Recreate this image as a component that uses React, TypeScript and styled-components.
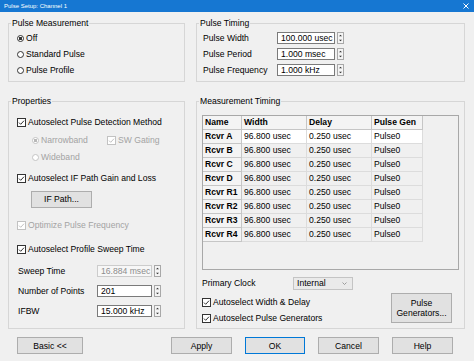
import styled, { createGlobalStyle } from 'styled-components'

const GlobalStyle = createGlobalStyle`
  html, body {
    margin: 0;
    padding: 0;
    background: #f0f0f0;
  }
  body {
    font-family: 'Liberation Sans', Arial, sans-serif;
    font-size: 8.6px;
    color: #000;
  }
  * {
    box-sizing: border-box;
  }
`

const rows = ['A', 'B', 'C', 'D', 'R1', 'R2', 'R3', 'R4']

const Check = ({ disabled }: { disabled?: boolean }) => {
  const c = disabled ? '#c2c2c2' : '#333'
  return (
    <MarkSvg width="9" height="9" viewBox="0 0 9 9">
      <rect x="0.5" y="0.5" width="8" height="8" fill="#fff" stroke={c} />
      <path d="M2 4.6 3.7 6.3 7 2.7" fill="none" stroke={c} strokeWidth="1" />
    </MarkSvg>
  )
}

const Spinner = () => (
  <SpinSvg width="7" height="12" viewBox="0 0 7 12">
    <rect x="0.5" y="0.5" width="6" height="11" fill="#f4f4f4" stroke="#a8a8a8" />
    <path d="M2 4.3 3.5 2.8 5 4.3Z" fill="#333" />
    <path d="M2 7.7 3.5 9.2 5 7.7Z" fill="#333" />
  </SpinSvg>
)

const CheckOption = ({ text, disabled }: { text: string; disabled?: boolean }) => (
  <Option $disabled={disabled}>
    <Check disabled={disabled} />
    {text}
  </Option>
)

const RadioOption = ({ text, on, disabled, w }: { text: string; on?: boolean; disabled?: boolean; w?: number }) => (
  <Option $disabled={disabled} $w={w}>
    <RadioMark $on={on} $disabled={disabled} />
    {text}
  </Option>
)

const Field = ({ label, value, lw, iw, disabled }: { label: string; value: string; lw: number; iw: number; disabled?: boolean }) => (
  <>
    <FieldLabel $w={lw}>{label}</FieldLabel>
    <TextBox $w={iw} $disabled={disabled}>{value}</TextBox>
    <Spinner />
  </>
)

export default function App() {
  return (
    <Window>
      <GlobalStyle />
      <TitleBar>
        <span>Pulse Setup: Channel 1</span>
        <svg width="6" height="6" viewBox="0 0 6 6">
          <path d="M0.5 0.5 5.5 5.5M5.5 0.5 0.5 5.5" stroke="#fff" strokeWidth="1" />
        </svg>
      </TitleBar>

      <Body>
        <Group>
          <Legend>Pulse Measurement</Legend>
          <Content $pt={2} $pl={8}>
            <Row><RadioOption text="Off" on /></Row>
            <Row><RadioOption text="Standard Pulse" /></Row>
            <Row><RadioOption text="Pulse Profile" /></Row>
          </Content>
        </Group>

        <Group>
          <Legend>Pulse Timing</Legend>
          <Content $pt={2} $pl={6}>
            <Row><Field label="Pulse Width" value="100.000 usec" lw={74} iw={58} /></Row>
            <Row><Field label="Pulse Period" value="1.000 msec" lw={74} iw={58} /></Row>
            <Row><Field label="Pulse Frequency" value="1.000 kHz" lw={74} iw={58} /></Row>
          </Content>
        </Group>

        <Group>
          <Legend>Properties</Legend>
          <Content $pt={8} $pl={8}>
            <Row><CheckOption text="Autoselect Pulse Detection Method" /></Row>
            <Row $mt={2} $indent={15}>
              <RadioOption text="Narrowband" on disabled w={75} />
              <CheckOption text="SW Gating" disabled />
            </Row>
            <Row $mt={1} $indent={15}><RadioOption text="Wideband" disabled /></Row>
            <Row $mt={5}><CheckOption text="Autoselect IF Path Gain and Loss" /></Row>
            <Row $mt={5} $indent={14}><Button $w={61}>IF Path...</Button></Row>
            <Row $mt={10}><CheckOption text="Optimize Pulse Frequency" disabled /></Row>
            <Row $mt={8}><CheckOption text="Autoselect Profile Sweep Time" /></Row>
            <Row $mt={6} $indent={1}><Field label="Sweep Time" value="16.884 msec" lw={79} iw={55} disabled /></Row>
            <Row $mt={4} $indent={1}><Field label="Number of Points" value="201" lw={79} iw={55} /></Row>
            <Row $mt={4} $indent={1}><Field label="IFBW" value="15.000 kHz" lw={79} iw={55} /></Row>
          </Content>
        </Group>

        <Group>
          <Legend>Measurement Timing</Legend>
          <Content $pt={9} $pl={5}>
            <Table>
              <Cell $head>Name</Cell>
              <Cell $head>Width</Cell>
              <Cell $head>Delay</Cell>
              <Cell $head>Pulse Gen</Cell>
              {rows.map((r, i) => (
                <RowGroup key={r}>
                  <Cell $head>Rcvr {r}</Cell>
                  <Cell $active={i === 0}>96.800 usec</Cell>
                  <Cell $active={i === 0}>0.250 usec</Cell>
                  <Cell $active={i === 0}>Pulse0</Cell>
                </RowGroup>
              ))}
            </Table>
            <Row $mt={5}>
              <FieldLabel $w={91}>Primary Clock</FieldLabel>
              <Select>
                Internal
                <svg width="5" height="3" viewBox="0 0 5 3">
                  <path d="M0.5 0.5 2.5 2.5 4.5 0.5" fill="none" stroke="#888" strokeWidth="0.8" />
                </svg>
              </Select>
            </Row>
            <ClockFooter>
              <CheckColumn>
                <Row><CheckOption text="Autoselect Width &amp; Delay" /></Row>
                <Row><CheckOption text="Autoselect Pulse Generators" /></Row>
              </CheckColumn>
              <Button $w={61} $h={30}>
                Pulse
                <br />
                Generators...
              </Button>
            </ClockFooter>
          </Content>
        </Group>
      </Body>

      <Footer>
        <Button $w={66}>Basic &lt;&lt;</Button>
        <FooterGroup>
          <Button $w={61}>Apply</Button>
          <Button $w={60} $default>OK</Button>
          <Button $w={61}>Cancel</Button>
          <Button $w={61}>Help</Button>
        </FooterGroup>
      </Footer>
    </Window>
  )
}

const Window = styled.div`
  width: 474px;
  height: 361px;
  background: #f0f0f0;
  display: flex;
  flex-direction: column;
  overflow: hidden;
`

const TitleBar = styled.div`
  height: 12px;
  flex: none;
  background: #1677d2;
  color: #fff;
  display: flex;
  align-items: center;
  justify-content: space-between;
  padding: 0 5px 0 4px;
  font-size: 6px;
  line-height: 12px;
`

const Body = styled.div`
  display: grid;
  grid-template-columns: 177px 269px;
  grid-template-rows: 64px 233px;
  column-gap: 11px;
  row-gap: 14px;
  padding: 6px 0 0 8px;
`

const Group = styled.fieldset`
  margin: 0;
  padding: 0;
  min-width: 0;
  border: 1px solid #d6d6d6;
  display: flex;
  flex-direction: column;
`

const Legend = styled.legend`
  margin-left: 2px;
  padding: 0 1px;
  line-height: 10px;
  font-size: 8.6px;
`

const Content = styled.div<{ $pt: number; $pl: number }>`
  display: flex;
  flex-direction: column;
  padding: ${p => p.$pt}px 0 0 ${p => p.$pl}px;
`

const Row = styled.div<{ $mt?: number; $indent?: number }>`
  display: flex;
  align-items: center;
  height: 16px;
  flex: none;
  margin-top: ${p => p.$mt ?? 0}px;
  padding-left: ${p => p.$indent ?? 0}px;
  white-space: nowrap;
`

const Option = styled.label<{ $disabled?: boolean; $w?: number }>`
  display: inline-flex;
  align-items: center;
  gap: 2px;
  width: ${p => (p.$w ? `${p.$w}px` : 'auto')};
  color: ${p => (p.$disabled ? '#a3a3a3' : '#000')};
  white-space: nowrap;
`

const MarkSvg = styled.svg`
  flex: none;
  display: block;
`

const RadioMark = styled.span<{ $on?: boolean; $disabled?: boolean }>`
  width: 7px;
  height: 7px;
  flex: none;
  border-radius: 50%;
  border: 1px solid ${p => (p.$disabled ? '#c4c4c4' : '#333')};
  background: ${p =>
    p.$on ? `radial-gradient(circle, ${p.$disabled ? '#b8b8b8' : '#333'} 0 1.4px, #fff 1.9px)` : '#fff'};
`

const FieldLabel = styled.span<{ $w: number }>`
  width: ${p => p.$w}px;
  flex: none;
  white-space: nowrap;
`

const TextBox = styled.div<{ $w: number; $disabled?: boolean }>`
  width: ${p => p.$w}px;
  height: 12px;
  flex: none;
  border: 1px solid ${p => (p.$disabled ? '#cccccc' : '#7a7a7a')};
  background: ${p => (p.$disabled ? '#f7f7f7' : '#fff')};
  color: ${p => (p.$disabled ? '#8d8d8d' : '#000')};
  padding-left: 3px;
  line-height: 10px;
  white-space: nowrap;
  overflow: hidden;
`

const SpinSvg = styled.svg`
  flex: none;
  display: block;
  margin-left: 2px;
`

const Button = styled.button<{ $w: number; $h?: number; $default?: boolean }>`
  width: ${p => p.$w}px;
  height: ${p => p.$h ?? 17}px;
  flex: none;
  margin: 0;
  padding: 0;
  font-family: inherit;
  font-size: 8.6px;
  line-height: 10px;
  color: #000;
  background: #e1e1e1;
  border: 1px solid ${p => (p.$default ? '#0078d7' : '#adadad')};
  border-radius: 0;
`

const Table = styled.div`
  width: 257px;
  height: 155px;
  flex: none;
  border: 1px solid #a8a8a8;
  background: #f0f0f0;
  display: grid;
  grid-template-columns: 39px 65px 65px 51px;
  grid-auto-rows: 14px;
  align-content: start;
`

const RowGroup = styled.div`
  display: contents;
`

const Cell = styled.div<{ $head?: boolean; $active?: boolean }>`
  padding-left: 2px;
  line-height: 13px;
  white-space: nowrap;
  overflow: hidden;
  font-weight: ${p => (p.$head ? 700 : 400)};
  background: ${p => (p.$active ? '#fff' : p.$head ? '#f4f4f4' : '#f0f0f0')};
  border-right: 1px solid ${p => (p.$head ? '#c6c6c6' : '#dcdcdc')};
  border-bottom: 1px solid ${p => (p.$head ? '#c6c6c6' : '#dcdcdc')};
`

const Select = styled.div`
  width: 60px;
  height: 13px;
  flex: none;
  border: 1px solid #c4c4c4;
  background: #eaeaea;
  display: flex;
  align-items: center;
  justify-content: space-between;
  padding: 0 5px 0 3px;
`

const ClockFooter = styled.div`
  display: flex;
  justify-content: space-between;
  align-items: flex-start;
  margin-top: 2px;
  padding-right: 12px;
`

const CheckColumn = styled.div`
  display: flex;
  flex-direction: column;
  padding-top: 1px;
`

const Footer = styled.div`
  display: flex;
  align-items: center;
  padding: 8px 21px 0 17px;
`

const FooterGroup = styled.div`
  margin-left: auto;
  display: flex;
  gap: 13px;
`
